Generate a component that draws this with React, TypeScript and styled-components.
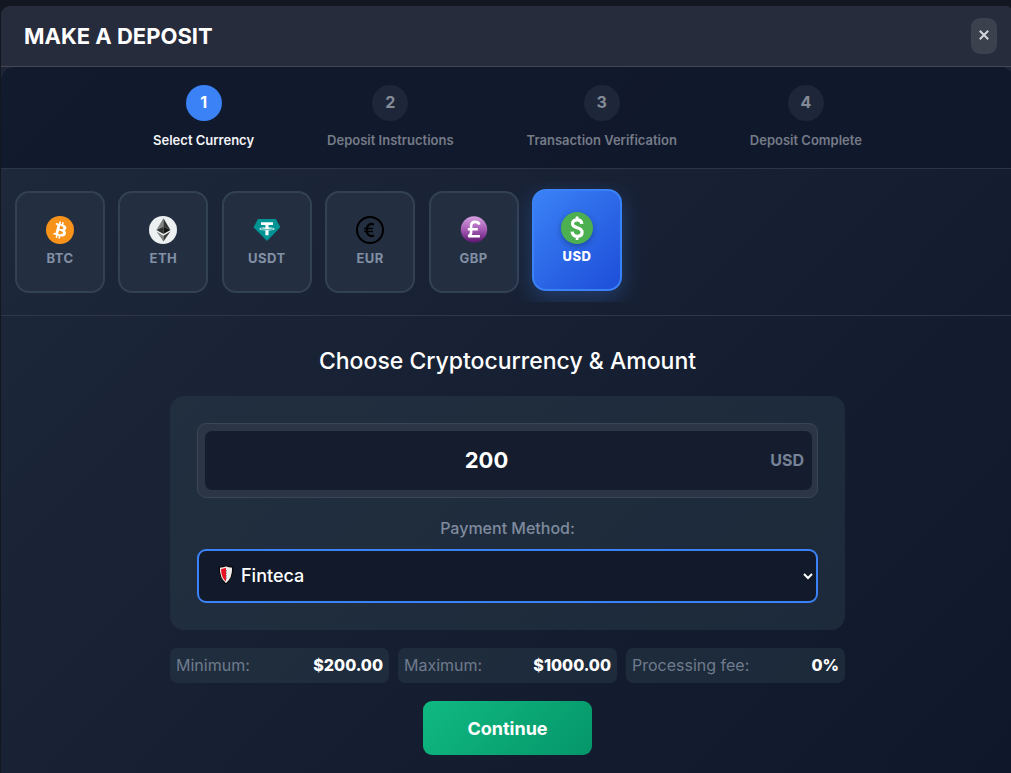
import React, { useState } from "react";
import styled, { createGlobalStyle, css } from "styled-components";

const GlobalStyle = createGlobalStyle`
  *, *::before, *::after { box-sizing: border-box; }
  body { margin: 0; background: #131722; overflow-x: hidden; }
  body, button, input, select { font-family: Inter, "Liberation Sans", sans-serif; }
`;

const Page = styled.div`
  min-height: 100vh;
  padding: 6px 0 0 1px;
  display: flex;
  flex-direction: column;
  overflow: hidden;
`;

const Modal = styled.main`
  flex: 1;
  margin-right: -3px;
  border-radius: 9px 9px 0 0;
  overflow: hidden;
  color: #fff;
  background: #1f2538;
  display: flex;
  flex-direction: column;
`;

const Header = styled.header`
  display: flex;
  align-items: center;
  justify-content: space-between;
  height: 61px;
  padding: 0 17px 0 23px;
  background: #272c3c;
  border-bottom: 1px solid #424752;
`;

const Title = styled.h1`
  margin: 0;
  font-size: 22px;
  line-height: 28px;
  font-weight: 700;
`;

const CloseButton = styled.button`
  display: flex;
  align-items: center;
  justify-content: center;
  width: 26px;
  height: 36px;
  padding: 0 0 2px;
  border: 0;
  border-radius: 9px;
  background: #3c414e;
  color: #d3d5d9;
`;

const Body = styled.div`
  flex: 1;
  border-radius: 14px 14px 0 0;
  overflow: hidden;
  background: linear-gradient(135deg, #1e293b 0%, #172033 50%, #0f172a 100%);
`;

const Steps = styled.ol`
  display: flex;
  justify-content: center;
  gap: 73px;
  height: 102px;
  margin: 0;
  padding: 18px 0 0;
  list-style: none;
  background: rgba(15, 23, 42, 0.8);
  border-bottom: 1px solid #2b3546;
`;

const Step = styled.li<{ $active?: boolean }>`
  display: flex;
  flex-direction: column;
  align-items: center;
  gap: 9px;
  font-size: 13px;
  line-height: 20px;
  font-weight: 600;
  color: ${(p) => (p.$active ? "#f4f5f7" : "#757b87")};
`;

const StepNumber = styled.span<{ $active?: boolean }>`
  display: flex;
  align-items: center;
  justify-content: center;
  width: 36px;
  height: 36px;
  padding-bottom: 2px;
  border-radius: 50%;
  font-size: 16px;
  font-weight: 700;
  background: ${(p) => (p.$active ? "#3b82f6" : "#1e273a")};
  color: ${(p) => (p.$active ? "#fff" : "#858b96")};
`;

const CurrencyBar = styled.div`
  height: 147px;
  padding: 13px 14px 0;
  border-bottom: 1px solid #2d3747;
`;

const CurrencyList = styled.div`
  display: flex;
  justify-content: space-between;
  max-width: 607px;
  padding: 9px 0;
  overflow-x: visible;
  overflow-y: clip;
`;

const CurrencyButton = styled.button<{ $active?: boolean }>`
  display: flex;
  flex-direction: column;
  align-items: center;
  width: 90px;
  height: 102px;
  padding: 23px 0 0;
  gap: 4px;
  border: 2px solid #334155;
  border-radius: 14px;
  background: #232f41;
  color: #8290a5;
  font-size: 13px;
  line-height: 20px;
  font-weight: 700;
  letter-spacing: 0.5px;

  svg { width: 28px; height: 28px; }

  ${(p) =>
    p.$active &&
    css`
      margin-top: -2px;
      padding-top: 21px;
      gap: 2px;
      border-color: #3b82f6;
      background: linear-gradient(135deg, #3b82f6, #1d4ed8);
      box-shadow: 0 7px 22px rgba(59, 130, 246, 0.3);
      color: #fff;
      font-weight: 800;

      svg { width: 32px; height: 32px; filter: drop-shadow(0 2px 3px rgba(0, 0, 0, 0.3)); }
    `}
`;

const Content = styled.section`
  display: flex;
  flex-direction: column;
  align-items: center;
  padding: 28px 16px 16px;
`;

const Heading = styled.h2`
  margin: 0 0 18px;
  font-size: 23px;
  line-height: 34px;
  font-weight: 500;
`;

const Card = styled.div`
  width: 100%;
  max-width: 675px;
  padding: 27px;
  border-radius: 14px;
  background: rgba(39, 57, 71, 0.5);
`;

const AmountFrame = styled.div`
  position: relative;
  padding: 7px;
  padding-right: 5px;
  border: 1px solid #3b4554;
  border-radius: 9px;
  background: #2b3546;
`;

const AmountInput = styled.input`
  display: block;
  width: 100%;
  height: 59px;
  padding: 0 62px 2px 18px;
  border: 0;
  border-radius: 7px;
  background: #141c2e;
  color: #fff;
  font-size: 22px;
  font-weight: 700;
  text-align: center;
`;

const AmountUnit = styled.label`
  position: absolute;
  top: 50%;
  right: 13px;
  transform: translateY(-50%);
  padding-bottom: 2px;
  color: #768296;
  font-size: 16px;
  line-height: 20px;
  font-weight: 700;
`;

const MethodLabel = styled.label`
  display: block;
  margin: 18px 0 9px;
  color: #7f8b9d;
  font-size: 16px;
  line-height: 24px;
  font-weight: 500;
  text-align: center;
`;

const MethodField = styled.div`
  position: relative;

  svg {
    position: absolute;
    left: 21px;
    top: 16px;
    pointer-events: none;
  }
`;

const MethodSelect = styled.select`
  display: block;
  width: 100%;
  height: 54px;
  padding: 0 4px 2px 38px;
  border: 2px solid #3b82f6;
  border-radius: 9px;
  outline: 0;
  background: #11192b;
  color: #fff;
  font-size: 18px;
  font-weight: 500;
`;

const Stats = styled.dl`
  display: grid;
  grid-template-columns: repeat(3, 1fr);
  gap: 9px;
  width: 100%;
  max-width: 675px;
  margin: 18px 0;
`;

const Stat = styled.div`
  display: flex;
  align-items: center;
  justify-content: space-between;
  height: 35px;
  padding: 0 6px 2px;
  border-radius: 7px;
  background: rgba(39, 57, 71, 0.5);
  font-size: 16px;

  dt { color: #6f7b8d; }
  dd { margin: 0; font-weight: 800; }
`;

const ContinueButton = styled.button`
  width: 169px;
  height: 54px;
  border: 0;
  border-radius: 9px;
  background: linear-gradient(135deg, #10b981, #059669);
  color: #fff;
  font-size: 18px;
  font-weight: 700;
`;

const BtcIcon = () => (
  <svg viewBox="0 0 32 32" aria-hidden="true">
    <circle cx="16" cy="16" r="16" fill="#f7931a" />
    <path fill="#fff" d="M23.189 14.02c.314-2.096-1.283-3.223-3.465-3.975l.708-2.84-1.728-.43-.69 2.765c-.454-.114-.92-.22-1.385-.326l.695-2.783L15.596 6l-.708 2.839c-.376-.086-.746-.17-1.104-.26l.002-.009-2.384-.595-.46 1.846s1.283.294 1.256.312c.7.175.826.638.805 1.006l-.806 3.235c.048.012.11.03.18.057l-.183-.045-1.13 4.532c-.086.212-.303.531-.793.41.018.025-1.256-.313-1.256-.313l-.858 1.978 2.25.561c.418.105.828.215 1.231.318l-.715 2.872 1.727.43.708-2.84c.472.127.93.245 1.378.357l-.706 2.828 1.728.43.715-2.866c2.948.558 5.164.333 6.097-2.333.752-2.146-.037-3.385-1.588-4.192 1.13-.26 1.98-1.003 2.207-2.538zm-3.95 5.538c-.533 2.147-4.148.986-5.32.695l.95-3.805c1.172.293 4.929.872 4.37 3.11zm.535-5.569c-.487 1.953-3.495.96-4.47.717l.86-3.45c.975.243 4.118.696 3.61 2.733z" />
  </svg>
);

const EthIcon = () => (
  <svg viewBox="0 0 32 32" aria-hidden="true">
    <circle cx="16" cy="16" r="16" fill="#ecf0f1" />
    <path fill="#828384" d="M16.500 2.500 8.500 16l8-3.700z" />
    <path fill="#343535" d="M16.500 2.500v9.800l8 3.700z" />
    <path fill="#2f3030" d="M8.500 16l8-3.700v8.400z" />
    <path fill="#131313" d="M24.500 16l-8-3.700v8.400z" />
    <path fill="#828384" d="M8.500 17.800l8 4.700v6.700z" />
    <path fill="#3c3c3b" d="M24.500 17.800l-8 4.700v6.700z" />
  </svg>
);

const UsdtIcon = () => (
  <svg viewBox="0 0 28 28" aria-hidden="true">
    <path fill="#009393" d="M5.400 3h17c.3 0 .5.1.6.3l4.200 7.400c.2.3.1.6-.1.800L14.500 24.600c-.3.300-.7.300-1 0L.9 11.700c-.2-.2-.3-.6-.1-.9l4-7.500c.1-.2.4-.3.6-.3z" />
    <path fill="#fff" d="M8 6.200h12v2.900h-4.400V11c3.500.2 6 .9 6 1.800s-2.500 1.600-6 1.800v4.700h-3.200v-4.700c-3.500-.2-6-.9-6-1.800s2.500-1.600 6-1.800V9.100H8z" />
    <path fill="none" stroke="#009393" strokeWidth=".8" d="M12.400 11.800c-2.800.1-4.600.5-4.600.9 0 .5 2.800 1 6.200 1s6.200-.5 6.200-1c0-.4-1.800-.8-4.600-.9" />
  </svg>
);

const EurIcon = () => (
  <svg viewBox="0 0 28 28" fill="none" stroke="#000" aria-hidden="true">
    <circle cx="14" cy="14" r="13" strokeWidth="2" />
    <path strokeWidth="2.200" d="M18 8.500c-4-1.600-7.300.6-7.300 5.500s3.300 7.100 7.300 5.500" />
    <path strokeWidth="1.700" d="M8 12.500h9M8 15.500h9" />
  </svg>
);

const GbpIcon = () => (
  <svg viewBox="0 0 28 28" aria-hidden="true">
    <defs>
      <linearGradient id="gbp-fill" x1="0" y1="0" x2="0" y2="1">
        <stop offset="0" stopColor="#d6a0e0" />
        <stop offset=".5" stopColor="#a65cb5" />
        <stop offset="1" stopColor="#5c1670" />
      </linearGradient>
    </defs>
    <circle cx="14" cy="13.500" r="13.200" fill="url(#gbp-fill)" />
    <path fill="none" stroke="#fff" strokeWidth="2.600" d="M19.300 8.600c-.4-1.700-1.900-2.700-3.900-2.700-2.700 0-4.300 1.600-4.300 4.100v6.500c0 1.700-.8 2.700-2.800 3.700h11.600M7.800 13.300h10" />
  </svg>
);

const UsdIcon = () => (
  <svg viewBox="0 0 32 32" aria-hidden="true">
    <circle cx="16" cy="16" r="16" fill="#4caf50" />
    <path fill="none" stroke="#fff" strokeWidth="3.200" d="M20.900 11.900c-.3-2.600-2-4-4.700-4-2.800 0-4.700 1.400-4.700 3.700 0 2.500 1.900 3.400 4.700 4.200 3.100.9 4.900 2 4.900 4.500s-2 4-4.900 4c-3.100 0-4.900-1.700-5.100-4.600" />
    <path stroke="#fff" strokeWidth="2.700" d="M16.100 4.600v3.900M16.100 24v4" />
  </svg>
);

const ShieldIcon = () => (
  <svg width="16" height="20" viewBox="0 0 16 20" aria-hidden="true">
    <path fill="#eee" stroke="#080808" strokeWidth="1.200" d="M8 .8C6 1.700 3.500 2 1.300 2.100c-.3 8 1.200 13 6.700 16.800 5.500-3.800 7-8.800 6.700-16.800C12.500 2 10 1.700 8 .8z" />
    <path fill="#e81224" d="M8 2.800c-1.600.7-3.200 1-4.900 1.100.1 5.900 1.300 9.500 4.900 12.500z" />
    <path stroke="#777" strokeWidth=".8" strokeDasharray="1.500 1" d="M8.400 5v9" />
  </svg>
);

const steps = ["Select Currency", "Deposit Instructions", "Transaction Verification", "Deposit Complete"];

const currencies = [
  { code: "BTC", Icon: BtcIcon },
  { code: "ETH", Icon: EthIcon },
  { code: "USDT", Icon: UsdtIcon },
  { code: "EUR", Icon: EurIcon },
  { code: "GBP", Icon: GbpIcon },
  { code: "USD", Icon: UsdIcon },
];

const limits = [
  ["Minimum:", "$200.00"],
  ["Maximum:", "$1000.00"],
  ["Processing fee:", "0%"],
];

export default function App() {
  const [currency, setCurrency] = useState("USD");
  const [amount, setAmount] = useState("200");

  return (
    <>
      <GlobalStyle />
      <Page>
        <Modal>
          <Header>
            <Title>MAKE A DEPOSIT</Title>
            <CloseButton type="button" aria-label="Close">
              <svg width="10" height="10" viewBox="0 0 10 10" stroke="currentColor" strokeWidth="2">
                <path d="M.8.8l8.400 8.400M9.200.8L.8 9.200" />
              </svg>
            </CloseButton>
          </Header>
          <Body>
            <Steps>
              {steps.map((label, i) => (
                <Step key={label} $active={i === 0}>
                  <StepNumber $active={i === 0}>{i + 1}</StepNumber>
                  {label}
                </Step>
              ))}
            </Steps>
            <CurrencyBar>
              <CurrencyList>
                {currencies.map(({ code, Icon }) => (
                  <CurrencyButton
                    key={code}
                    type="button"
                    $active={code === currency}
                    aria-pressed={code === currency}
                    onClick={() => setCurrency(code)}
                  >
                    <Icon />
                    {code}
                  </CurrencyButton>
                ))}
              </CurrencyList>
            </CurrencyBar>
            <Content>
              <Heading>Choose Cryptocurrency &amp; Amount</Heading>
              <Card>
                <AmountFrame>
                  <AmountInput
                    id="amount"
                    inputMode="decimal"
                    value={amount}
                    onChange={(e) => setAmount(e.target.value)}
                  />
                  <AmountUnit htmlFor="amount">{currency}</AmountUnit>
                </AmountFrame>
                <MethodLabel htmlFor="method">Payment Method:</MethodLabel>
                <MethodField>
                  <MethodSelect id="method" defaultValue="finteca">
                    <option value="finteca">Finteca</option>
                  </MethodSelect>
                  <ShieldIcon />
                </MethodField>
              </Card>
              <Stats>
                {limits.map(([name, value]) => (
                  <Stat key={name}>
                    <dt>{name}</dt>
                    <dd>{value}</dd>
                  </Stat>
                ))}
              </Stats>
              <ContinueButton type="button">Continue</ContinueButton>
            </Content>
          </Body>
        </Modal>
      </Page>
    </>
  );
}
